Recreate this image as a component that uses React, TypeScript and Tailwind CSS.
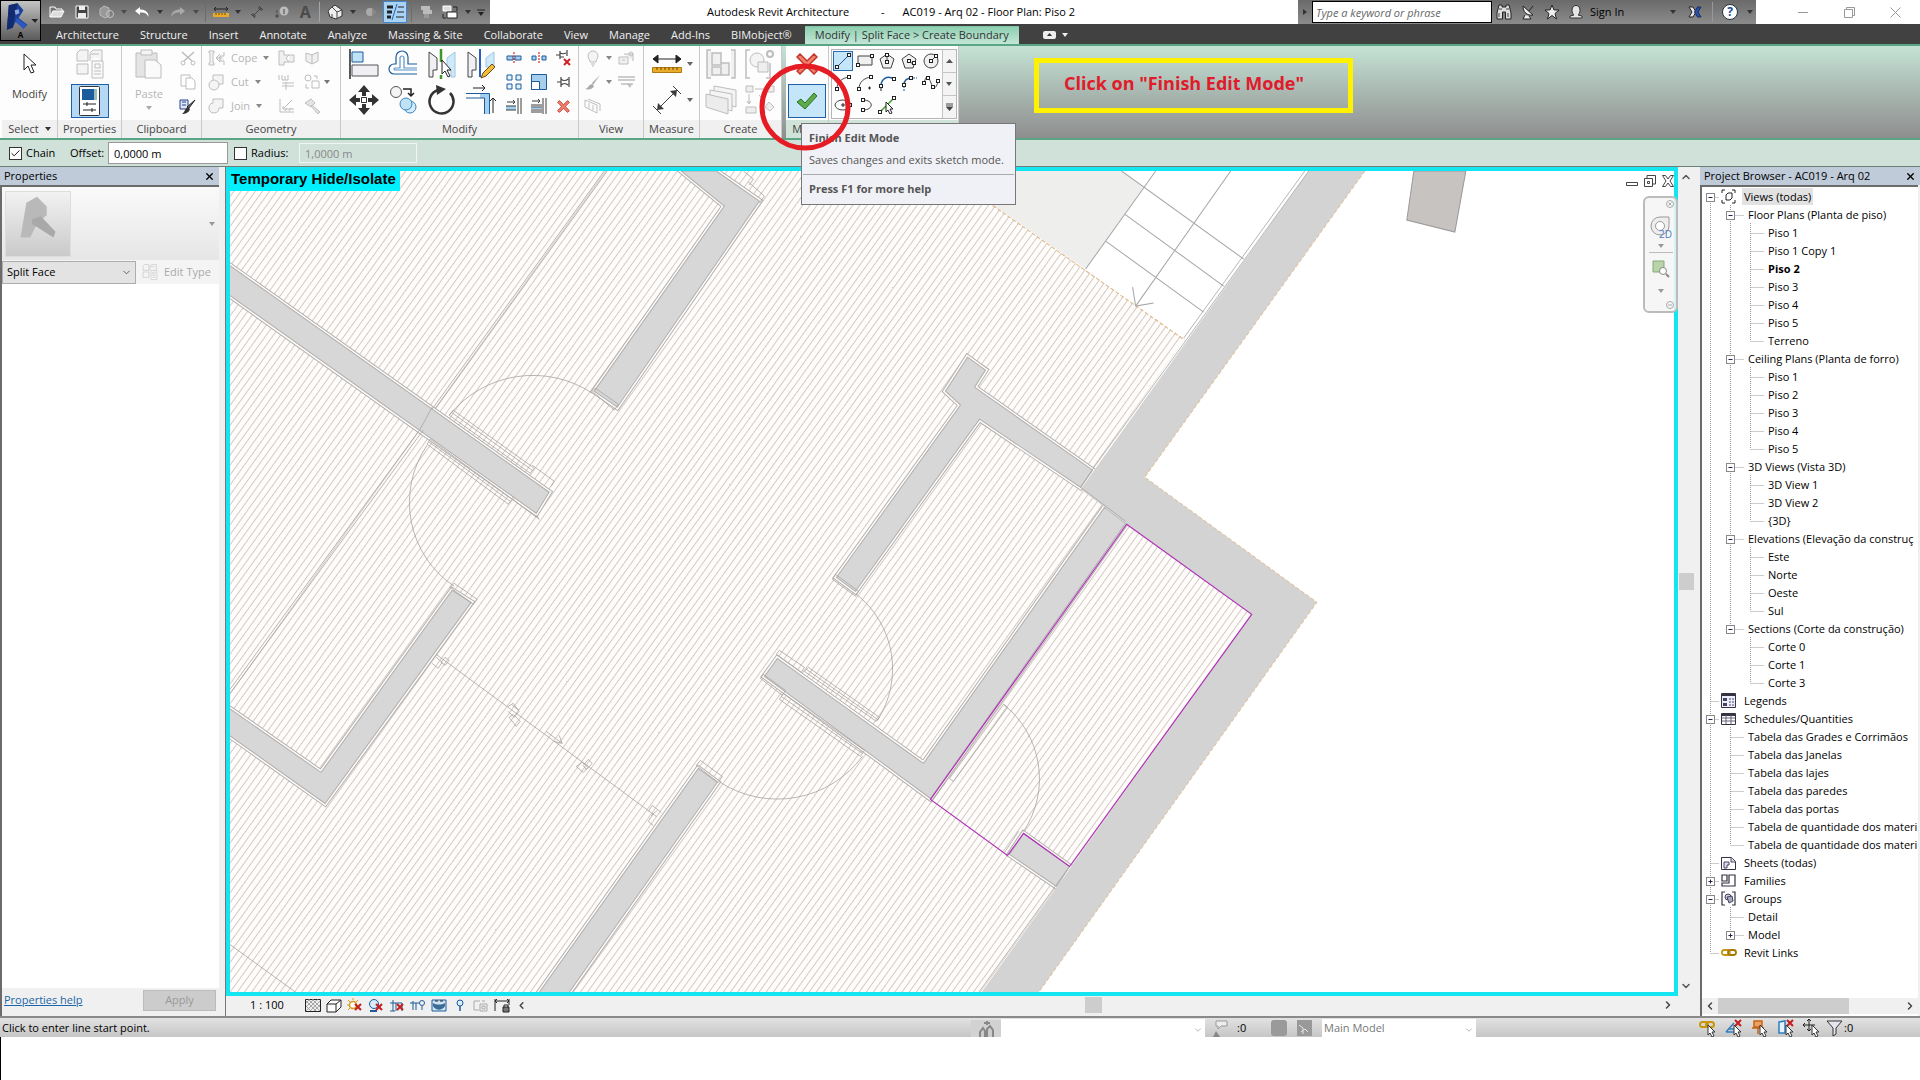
import type { ReactNode } from 'react'
import { Check, ChevronDown, ChevronLeft, ChevronRight, ChevronUp, X } from 'lucide-react'

type IconProps = { w?: number; h?: number; children: ReactNode }

function Svg({ w = 20, h = 20, children }: IconProps) {
  return (
    <svg width={w} height={h} viewBox={`0 0 ${w} ${h}`} fill="none" className="block shrink-0" aria-hidden="true">
      {children}
    </svg>
  )
}

function Caret({ color = '#666' }: { color?: string }) {
  return (
    <Svg w={6} h={4}>
      <path d="M0 0h6L3 4z" fill={color} />
    </Svg>
  )
}

function Btn({ label, className = '', children }: { label: string; className?: string; children: ReactNode }) {
  return (
    <button type="button" aria-label={label} className={`flex items-center justify-center ${className}`}>
      {children}
    </button>
  )
}

/* ---------- title bar ---------- */

function AppButton() {
  return (
    <button
      type="button"
      aria-label="Application menu"
      className="absolute left-0 top-0 z-10 flex h-[41px] w-[41px] flex-col items-center border border-black bg-linear-to-b from-[#c4c4c4] to-[#5c5c5c]"
    >
      <svg viewBox="0 0 40 30" className="block h-[30px] w-full" aria-hidden="true">
        <path d="M8 4l9-2 6 7-5 8 9 7-4 4-8-7-3 6-6 2z" fill="#1b3f9c" />
        <path d="M8 4l9-2-2 9-3 16-6 2z" fill="#122a6e" />
        <path d="M14 9l4-1 1 4-4 2z" fill="#8fa6dc" />
        <path d="M16 17l10 7-3 4-8-8z" fill="#2c57c4" />
        <path d="M31 18h7l-3 4z" fill="#222" />
      </svg>
      <span className="text-[8px] font-bold leading-2 text-black">A</span>
    </button>
  )
}

function Sep() {
  return <span className="mx-1 h-5 w-px bg-[#6b6b6b]" />
}

function QuickAccess() {
  return (
    <div className="flex h-6 w-[490px] items-center bg-linear-to-b from-[#6a6a6a] to-[#8c8c8c] pl-[45px]">
      <Btn label="Open" className="w-6">
        <Svg w={16} h={14}>
          <path d="M1 12V2h5l1 2h6v2" stroke="#fff" />
          <path d="M1 12l3-6h11l-3 6z" fill="#ddd" stroke="#fff" />
        </Svg>
      </Btn>
      <Btn label="Save" className="w-[26px]">
        <Svg w={14} h={14}>
          <path d="M1 1h12v12H1z" fill="#444" stroke="#fff" />
          <path d="M4 1h6v4H4zM3 8h8v5H3z" fill="#eee" />
        </Svg>
      </Btn>
      <Btn label="Synchronize" className="w-6">
        <Svg w={16} h={14}>
          <path d="M1 4l4-3 5 2v8l-4 2-5-3z" fill="#999" stroke="#bbb" />
          <circle cx="11" cy="9" r="3.5" stroke="#c4c4c4" />
        </Svg>
      </Btn>
      <Btn label="Synchronize options" className="w-2.5"><Caret color="#4a4a4a" /></Btn>
      <Btn label="Undo" className="w-[26px]">
        <Svg w={16} h={12}>
          <path d="M6 1L1 5l5 4V6.500c4-.5 7 .5 8.500 4.500C15 6 11 3.500 6 3.500z" fill="#fff" />
        </Svg>
      </Btn>
      <Btn label="Undo options" className="w-2.5"><Caret color="#333" /></Btn>
      <Btn label="Redo" className="w-[26px]">
        <Svg w={16} h={12}>
          <path d="M10 1l5 4-5 4V6.500C6 6 3 7 1.500 11 1 6 5 3.500 10 3.500z" fill="#aaa" />
        </Svg>
      </Btn>
      <Btn label="Redo options" className="w-2.5"><Caret color="#4a4a4a" /></Btn>
      <Sep />
      <Btn label="Measure" className="w-[22px]">
        <Svg w={16} h={12}>
          <path d="M1 3h14M3 1L1 3l2 2M13 1l2 2-2 2" stroke="#222" />
          <path d="M0 7h16v4H0z" fill="#e9ab2b" />
          <path d="M3 7v2M6 7v2M9 7v2M12 7v2" stroke="#704c00" />
        </Svg>
      </Btn>
      <Btn label="Measure options" className="w-3"><Caret color="#333" /></Btn>
      <Btn label="Aligned dimension" className="w-7">
        <Svg w={14} h={14}>
          <path d="M3 11l8-8M1 9l4 4M9 1l4 4M8 3h3v3M3 8v3h3" stroke="#444" />
        </Svg>
      </Btn>
      <Btn label="Tag by category" className="w-[22px]">
        <Svg w={14} h={14}>
          <path d="M0 11h4M2 9v4M2 5v3" stroke="#444" />
          <circle cx="9" cy="6" r="4.500" fill="#bbb" />
          <path d="M9 4v5" stroke="#444" />
        </Svg>
      </Btn>
      <Btn label="Text" className="w-6">
        <span className="text-base font-bold leading-5 text-[#4b4b4b]">A</span>
      </Btn>
      <span className="mx-0.5 h-5 w-px bg-[#a5a5a5]" />
      <Btn label="Default 3D view" className="w-[26px]">
        <Svg w={16} h={16}>
          <path d="M1 7l4-4 3-2 7 5v6l-6 3-6-2z" fill="#eee" stroke="#333" />
          <path d="M1 7l4-4 5 5v7M10 8l5-2M5 10v3" stroke="#444" />
        </Svg>
      </Btn>
      <Btn label="3D view options" className="w-2.5"><Caret color="#333" /></Btn>
      <Btn label="Section" className="w-[25px]">
        <Svg w={12} h={12}>
          <circle cx="5" cy="6" r="4" fill="#aaa" />
          <path d="M7 2l5 4-5 4z" fill="#888" />
        </Svg>
      </Btn>
      <Btn label="Thin lines" className="h-[22px] w-6 border border-[#3f87cf] bg-[#a9d2f3]">
        <Svg w={18} h={16}>
          <path d="M1 3h6M1 8h5M1 13h4" stroke="#222" strokeWidth="3" />
          <path d="M12 3h6M11 8h7M10 13h8" stroke="#222" />
          <path d="M11 0L6 16" stroke="#1f64c0" />
        </Svg>
      </Btn>
      <Sep />
      <Btn label="Close hidden windows" className="w-5">
        <Svg w={12} h={14}>
          <path d="M1 1h9v4H1zM3 5h9v4H3z" fill="#bbb" />
          <path d="M4 9h5v4H4z" fill="#999" />
        </Svg>
      </Btn>
      <Btn label="Switch windows" className="w-7">
        <Svg w={16} h={16}>
          <path d="M1 2h8v5H1z" fill="#ddd" stroke="#fff" />
          <path d="M5 8h10v6H5z" fill="#fff" stroke="#222" />
          <path d="M11 3h4v4M1 10v4h3" stroke="#222" />
        </Svg>
      </Btn>
      <Btn label="Window options" className="w-2"><Caret color="#333" /></Btn>
      <Btn label="Customize toolbar" className="w-[18px]">
        <Svg w={8} h={7}>
          <path d="M0 1h8" stroke="#222" />
          <path d="M1 3h6L4 7z" fill="#222" />
        </Svg>
      </Btn>
    </div>
  )
}

function InfoCenter() {
  return (
    <div className="flex h-6 w-[458px] items-center bg-linear-to-b from-[#6a6a6a] to-[#8c8c8c]">
      <span className="flex w-3.5 justify-center">
        <Svg w={4} h={6}><path d="M0 0l4 3-4 3z" fill="#333" /></Svg>
      </span>
      <input
        aria-label="Search"
        placeholder="Type a keyword or phrase"
        className="h-[22px] w-[180px] border border-black bg-white px-[3px] italic outline-none placeholder:text-[#666]"
      />
      <Btn label="Search help" className="w-6">
        <Svg w={16} h={16}>
          <path d="M3 1h3v2h4V1h3l2 8v6h-5.500V8h-3v7H1V9z" fill="#ddd" stroke="#222" />
          <path d="M3 9v4M12 9v4M3 5h3M10 5h3" stroke="#444" />
        </Svg>
      </Btn>
      <Btn label="Communication center" className="w-6">
        <Svg w={14} h={16}>
          <path d="M2 2c0 6 4 10 10 9zM8 7l4-5M4 11l-2 4h8l-2-3" fill="#eee" stroke="#222" />
        </Svg>
      </Btn>
      <Btn label="Favorites" className="w-6">
        <Svg w={16} h={16}>
          <path d="M8 1l2 5h5l-4 3.500L12.500 15 8 11.500 3.500 15 5 9.500 1 6h5z" fill="#eee" stroke="#222" />
        </Svg>
      </Btn>
      <button type="button" className="flex w-[104px] items-center gap-1.5 pl-1 text-black">
        <Svg w={16} h={16}>
          <path d="M4 6c0-6 8-6 8 0 0 3-1 4-2 5l4 1v2H2v-2l4-1C5 10 4 9 4 6z" fill="#e6e6e6" stroke="#333" />
        </Svg>
        Sign In
      </button>
      <Btn label="Sign in options" className="w-2.5"><Caret color="#333" /></Btn>
      <Btn label="Exchange apps" className="w-[34px]">
        <Svg w={14} h={14}>
          <path d="M1 2h4l3 5-3 5H1l3-5z" fill="#e6e6e6" stroke="#223" />
          <path d="M13 2H9.500L6.500 7l3 5H13l-3-5z" fill="#2850a8" stroke="#1b2f66" />
        </Svg>
      </Btn>
      <span className="h-5 w-px bg-[#999]" />
      <Btn label="Help" className="w-[34px]">
        <span className="flex h-4 w-4 items-center justify-center rounded-full border border-[#234] bg-white text-xs font-bold leading-4 text-[#224a9c]">
          ?
        </span>
      </Btn>
      <Btn label="Help options" className="w-1.5"><Caret color="#333" /></Btn>
    </div>
  )
}

function TitleBar() {
  return (
    <header className="relative flex h-6 bg-white">
      <AppButton />
      <QuickAccess />
      <div className="flex flex-1 items-center justify-center gap-8 whitespace-pre pr-1.5 text-black">
        <span>Autodesk Revit Architecture</span>
        <span>-</span>
        <span className="-ml-3.5">AC019 - Arq 02 - Floor Plan: Piso 2</span>
      </div>
      <InfoCenter />
      <div className="flex w-[164px] items-center pl-6">
        <Btn label="Minimize" className="w-[46px]"><Svg w={10} h={10}><path d="M0 5.500h10" stroke="#999" /></Svg></Btn>
        <Btn label="Restore" className="w-[46px]">
          <Svg w={11} h={11}><path d="M.5 2.500h8v8h-8zM2.500 2V.5h8v8H9" stroke="#999" /></Svg>
        </Btn>
        <Btn label="Close" className="w-[46px]"><Svg w={11} h={11}><path d="M.5.5l10 10M10.500.5l-10 10" stroke="#999" /></Svg></Btn>
      </div>
    </header>
  )
}

const tabs = [
  'Architecture', 'Structure', 'Insert', 'Annotate', 'Analyze', 'Massing & Site',
  'Collaborate', 'View', 'Manage', 'Add-Ins', 'BIMobject®',
]

function TabBar() {
  return (
    <nav className="flex h-5 items-end gap-px bg-[#414141] pl-[46px] text-[#f0f0f0]">
      {tabs.map((tab) => (
        <button key={tab} type="button" className="h-[18px] whitespace-nowrap px-2.5">{tab}</button>
      ))}
      <button
        type="button"
        className="ml-0.5 h-[18px] whitespace-nowrap border-t border-[#7fc4a5] bg-linear-to-b from-[#8fd0b2] to-[#c2e6d6] px-2.5 text-[#333]"
      >
        Modify | Split Face &gt; Create Boundary
      </button>
      <Btn label="Minimize ribbon" className="ml-[22px] h-[18px] w-4">
        <Svg w={13} h={8}>
          <rect width="13" height="8" rx="2" fill="#eee" />
          <path d="M4 5h5L6.500 2z" fill="#333" />
        </Svg>
      </Btn>
      <Btn label="Ribbon display options" className="h-[18px] w-3"><Caret color="#eee" /></Btn>
    </nav>
  )
}

/* ---------- ribbon ---------- */

function Panel({ title, className, tint = 'bg-[#f0f0f0]', children }: {
  title: ReactNode
  className: string
  tint?: string
  children: ReactNode
}) {
  return (
    <section className={`flex shrink-0 flex-col border-r border-[#c9c9c9] bg-[#fdfdfd] ${className}`}>
      <div className="flex flex-1 justify-center">{children}</div>
      <h2 className={`flex h-[18px] items-center justify-center gap-1.5 overflow-hidden whitespace-nowrap ${tint}`}>{title}</h2>
    </section>
  )
}

function Big({ label, children, w = 'w-[39px]' }: { label: string; children: ReactNode; w?: string }) {
  return <Btn label={label} className={`h-9 ${w}`}>{children}</Btn>
}

function Small({ label, children, w = 'w-[25px]' }: { label: string; children: ReactNode; w?: string }) {
  return <Btn label={label} className={`h-6 ${w}`}>{children}</Btn>
}

const G = '#bdbdbd'
const B = '#1d5c9c'
const D = '#3c3c3c'

function TypeIcon({ s = 30 }: { s?: number }) {
  return (
    <svg width={s} height={s} viewBox="0 0 30 30" fill="none" stroke={G} aria-hidden="true">
      <path d="M2 4l3-3h8v11H2zM15 4l3-3h9v11M2 15h11v10H2zM15 12V5h9" fill="#f4f4f4" />
      <path d="M17 12h11v17H17z" fill="#fafafa" />
      <path d="M20 15h5v4h-5zM19 22h7M19 25h7" />
    </svg>
  )
}

function SelectPanel() {
  return (
    <Panel title={<>Select <Caret color="#333" /></>} className="w-[58px] pl-0.5">
      <button type="button" className="flex flex-col items-center self-start">
        <span className="flex h-9 items-center">
          <Svg w={14} h={22}>
            <path d="M2 1v16l4-4 3 7 3-1-3-7h5z" fill="#fff" stroke="#222" />
          </Svg>
        </span>
        <span className="leading-6">Modify</span>
      </button>
    </Panel>
  )
}

function PropertiesPanel() {
  return (
    <Panel title="Properties" className="w-16">
      <div className="flex flex-col items-center">
        <Big label="Type properties"><TypeIcon /></Big>
        <Btn label="Properties" className="mt-0.5 h-[34px] w-[38px] border border-[#1f5fa8] bg-[#b5d9f5]">
          <Svg w={21} h={30}>
            <rect x=".5" y=".5" width="20" height="29" rx="1" fill="#fff" stroke="#333" />
            <path d="M3 3h12v11H3z" fill="#1d5c9c" />
            <path d="M15 3h3v11h-3z" fill="#9bb" />
            <path d="M4 18h13M4 24h13M8 16v4M13 22v4" stroke="#222" />
          </Svg>
        </Btn>
      </div>
    </Panel>
  )
}

function ClipboardPanel() {
  return (
    <Panel title="Clipboard" className="w-20">
      <button type="button" className="flex w-[52px] flex-col items-center self-start text-[#b5b5b5]">
        <span className="flex h-9 items-center">
          <Svg w={28} h={30}>
            <path d="M1 4h21v24H1z" fill="#e4e4e4" stroke={G} />
            <path d="M6 1h11v5H6z" fill="#f4f4f4" stroke={G} />
            <path d="M10 11h10l6 5v13H10z" fill="#fafafa" stroke={G} />
          </Svg>
        </span>
        <span className="leading-6">Paste</span>
        <Caret color="#aaa" />
      </button>
      <div className="flex flex-col">
        <Small label="Cut">
          <Svg w={16} h={16}>
            <path d="M2 2l10 9M14 2L4 11" stroke={G} strokeWidth="1.500" />
            <circle cx="3" cy="13" r="2" stroke={G} /><circle cx="13" cy="13" r="2" stroke={G} />
          </Svg>
        </Small>
        <Small label="Copy">
          <Svg w={16} h={16}><path d="M1 1h9v11H1z" stroke={G} /><path d="M6 4h6l3 3v8H6z" fill="#fff" stroke={G} /></Svg>
        </Small>
        <Small label="Match type">
          <Svg w={17} h={17}>
            <path d="M1 2h8v9H1z" fill="#dde8f8" stroke="#27408b" />
            <path d="M3 4h4M3 7h4" stroke="#27408b" />
            <path d="M16 2l-6 8-2-1z" fill="#777" stroke="#222" />
            <path d="M9 9l2 2c-1 4-5 5-8 5 3-2 3-6 6-7z" fill="#333" />
          </Svg>
        </Small>
      </div>
    </Panel>
  )
}

const geometryTools = [
  { name: 'Cope', d: 'M1 1h5v2H5v10h1v2H1v-2h1V3H1zM16 2v4h-4v5h4v4M12 4L8 8l4 4M8 8h6' },
  { name: 'Cut', d: 'M5 1h10v9h-4M5 6V1M6 6a5 5 0 1 0 0 10 5 5 0 0 0 0-10z' },
  { name: 'Join', d: 'M5 1h10v9h-4a5 5 0 1 1-6-5z' },
]

function GeometryPanel() {
  return (
    <Panel title="Geometry" className="w-[139px]">
      <div className="flex w-full pl-1.5">
        <div className="flex w-[66px] flex-col">
          {geometryTools.map((tool) => (
            <button key={tool.name} type="button" className="flex h-6 items-center gap-1.5 text-[#b5b5b5]">
              <Svg w={17} h={17}><path d={tool.d} stroke={G} fill="#f4f4f4" /></Svg>
              {tool.name}
              <Caret color="#888" />
            </button>
          ))}
        </div>
        <div className="flex flex-col">
          <Small label="Wall joins"><Svg w={17} h={16}><path d="M1 1h5v4h10v7H6v3H1zM11 5L8 8l3 4" stroke={G} fill="#f0f0f0" /></Svg></Small>
          <Small label="Beam joins"><Svg w={17} h={16}><path d="M1 1v5M4 1v5h6V1M7 2v4M4 9h12M4 12h12M8 8v8" stroke={G} /></Svg></Small>
          <Small label="Split face"><Svg w={17} h={16}><path d="M2 1v13h14M5 11L14 2M5 8v3h11M7 13l2-3M11 13l2-3" stroke={G} /></Svg></Small>
        </div>
        <div className="flex flex-col">
          <Small label="Paint"><Svg w={16} h={16}><path d="M2 3l6 2 6-3v9l-6 3-6-3zM8 5v9" stroke={G} fill="#f0f0f0" /></Svg></Small>
          <Small label="Unjoin"><Svg w={16} h={17}><circle cx="4" cy="4" r="3" stroke={G} /><path d="M8 7h7v7H8zM10 2h3v3M2 10v4h3" stroke={G} /></Svg></Small>
          <Small label="Demolish"><Svg w={16} h={16}><path d="M1 5l6-4 4 4-4 4zM8 7l8 7-2 2-7-8z" stroke={G} fill="#e4e4e4" /></Svg></Small>
        </div>
        <span className="flex h-[72px] items-center"><Caret color="#777" /></span>
      </div>
    </Panel>
  )
}

function RedX({ s }: { s: number }) {
  return (
    <svg width={s} height={s} viewBox="0 0 22 22" aria-hidden="true">
      <path d="M1 4l3-3 7 7 7-7 3 3-7 7 7 7-3 3-7-7-7 7-3-3 7-7z" fill="#f0806e" stroke="#c4362c" strokeWidth="1.500" />
    </svg>
  )
}

function ModifyPanel() {
  return (
    <Panel title="Modify" className="w-[238px]">
      <div className="grid grid-cols-4 content-start pl-px">
        <Big label="Align">
          <Svg w={30} h={30}>
            <path d="M1 0v30" stroke="#222" strokeWidth="1.500" />
            <path d="M3 3h11v10H3z" fill="#bfe2f7" stroke={B} />
            <path d="M3 16h26v11H3z" fill="#f0f0f4" stroke="#555" />
          </Svg>
        </Big>
        <Big label="Offset">
          <Svg w={30} h={28}>
            <path d="M29 14H20V7a6 6 0 0 0-12 0v7H6a4 4 0 0 0 0 10h23" stroke={B} strokeWidth="1.200" />
            <path d="M29 18H16V8a2 2 0 0 0-4 0v10H7a1 1 0 0 0 0 2h22" stroke="#5b93c8" strokeWidth="1.200" />
          </Svg>
        </Big>
        <Big label="Mirror by axis">
          <Svg w={30} h={30}>
            <path d="M2 28V3l8 6v12H6v7z" fill="#f0f0f4" stroke="#444" />
            <path d="M28 28V3l-8 6v12h4v7z" fill="#cfe9f9" stroke="#9cc7e4" />
            <path d="M14 0v13M14 26v4" stroke="#3c9a28" strokeWidth="2.500" />
            <path d="M15 11v14l3-3 3 6 2-1-3-6h4z" fill="#fff" stroke="#222" />
          </Svg>
        </Big>
        <Big label="Mirror by line">
          <Svg w={30} h={30}>
            <path d="M2 28V3l8 6v12H6v7z" fill="#f0f0f4" stroke="#444" />
            <path d="M28 18V3l-8 6v9z" fill="#cfe9f9" stroke="#9cc7e4" />
            <path d="M14 0v28" stroke="#2860c0" strokeWidth="2" />
            <path d="M15 29l2-5 9-9 3 3-9 9z" fill="#f2bd3e" stroke="#6b4a10" />
          </Svg>
        </Big>
        <Big label="Move">
          <Svg w={30} h={30}>
            <path d="M15 0l6 7h-4v4h-4V7H9zM15 30l6-7h-4v-4h-4v4H9zM0 15l7-6v4h4v4H7v4zM30 15l-7-6v4h-4v4h4v4z" fill="#333" />
            <path d="M12.500 12.500h5v5h-5z" fill="#fff" stroke="#333" />
          </Svg>
        </Big>
        <Big label="Copy element">
          <Svg w={30} h={30}>
            <circle cx="8" cy="7" r="5.500" fill="#f4f4f4" stroke="#555" />
            <path d="M15 4h8v6M20 8l3 3 3-3" stroke="#222" strokeWidth="1.500" />
            <circle cx="22" cy="22" r="6" fill="#d6ecfa" stroke="#3c84b8" />
            <circle cx="18" cy="19" r="6" fill="#bfe2f7" stroke="#3c84b8" />
          </Svg>
        </Big>
        <Big label="Rotate">
          <Svg w={30} h={30}>
            <path d="M23 8a12 12 0 1 1-12-3" stroke="#333" strokeWidth="2.500" />
            <path d="M9 0l10 4-9 6z" fill="#333" />
          </Svg>
        </Big>
        <Big label="Trim to corner">
          <Svg w={30} h={30}>
            <path d="M14 9h9v20h-4V13h-5z" fill="#a5cfec" />
            <path d="M0 8.500h23.500V29M0 13h18.500v16" stroke={B} />
            <path d="M7 3h12M16 0l3 3-3 3M27 28V13M24 16l3-3 3 3" stroke="#222" />
          </Svg>
        </Big>
      </div>
      <div className="ml-px grid grid-cols-3 content-start">
        <Small label="Split element">
          <Svg w={16} h={12}><path d="M1 4h6v4H1zM9 4h6v4H9z" fill="#a5cfec" stroke={B} /><path d="M8 0v12" stroke="#c00" strokeDasharray="2 1" /></Svg>
        </Small>
        <Small label="Split with gap">
          <Svg w={16} h={12}><path d="M1 4h4v4H1zM11 4h4v4h-4z" fill="#a5cfec" stroke={B} /><path d="M8 0v12" stroke="#c00" strokeDasharray="2 1" /></Svg>
        </Small>
        <Small label="Unpin">
          <Svg w={16} h={16}>
            <path d="M0 5h4M4 1v8M4 3c2 1 4 1 6 0M4 7h4M11 0v6" stroke="#444" strokeWidth="1.200" />
            <path d="M8 9l6 6M14 9l-6 6" stroke="#c22" strokeWidth="2" />
          </Svg>
        </Small>
        <Small label="Array">
          <Svg w={16} h={16}>
            <path d="M1 1h5v5H1zM10 1h5v5h-5zM1 10h5v5H1zM10 10h5v5h-5z" fill="#e3f2fb" stroke={B} />
          </Svg>
        </Small>
        <Small label="Scale">
          <Svg w={16} h={16}><path d="M.5.5h15v15H.5z" fill="#a5cfec" stroke={B} /><path d="M.5 7.500h8v8h-8z" fill="#fff" stroke={B} /></Svg>
        </Small>
        <Small label="Pin">
          <Svg w={14} h={12}><path d="M0 6h4M4 1v10M4 3c2 2 5 2 7 0M4 9c2-2 5-2 7 0M12 1v10" stroke="#444" strokeWidth="1.200" /></Svg>
        </Small>
        <Small label="Trim single">
          <Svg w={16} h={16}><path d="M0 8h10v4H0z" fill="#a5cfec" /><path d="M0 8h10M0 12h10M1 4h8M7 2l2 2-2 2M12 0v16M15 0v16" stroke={D} /></Svg>
        </Small>
        <Small label="Trim multiple">
          <Svg w={16} h={16}><path d="M0 7h11M0 9h11M0 12h11M0 14h11M1 3h8M7 1l2 2-2 2M12 0v16M15 0v16" stroke={D} /><path d="M0 10h11" stroke="#5b93c8" /></Svg>
        </Small>
        <Small label="Delete"><RedX s={13} /></Small>
      </div>
    </Panel>
  )
}

function ViewPanel() {
  return (
    <Panel title="View" className="w-[65px]">
      <div className="grid w-full grid-cols-[26px_8px_1fr] content-start pl-px">
        <Small label="Hide in view"><Svg w={12} h={17}><path d="M3 12c0-3-2-3-2-6a5 5 0 0 1 10 0c0 3-2 3-2 6zM4 14h4M5 16h2" stroke={G} fill="#f4f4f4" /></Svg></Small>
        <span className="flex items-center"><Caret color="#888" /></span>
        <Small label="Override graphics"><Svg w={17} h={14}><path d="M1 6h9v7H1zM6 3h9v7M4 9h3" stroke={G} fill="#f0f0f0" /><circle cx="13" cy="3" r="2" stroke={G} /></Svg></Small>
        <Small label="Linework"><Svg w={17} h={15}><path d="M16 0l-8 8 1 2zM8 9c-4 1-3 4-7 5 4 1 8 0 9-3z" fill="#aaa" /></Svg></Small>
        <span className="flex items-center"><Caret color="#888" /></span>
        <Small label="Displace"><Svg w={17} h={12}><path d="M0 1h17M0 4h17M3 8h12" stroke={G} strokeWidth="1.500" /><path d="M9 8h5l-2 4z" fill={G} /></Svg></Small>
        <Small label="Selection box"><Svg w={17} h={16}><path d="M1 2l12 5v8L1 9zM4 1l12 5v7M5 5v5M9 7v5" stroke={G} /></Svg></Small>
      </div>
    </Panel>
  )
}

function MeasurePanel() {
  return (
    <Panel title="Measure" className="w-14">
      <div className="grid grid-cols-[34px_12px] content-start pl-0.5">
        <Big label="Measure between" w="w-[34px]">
          <Svg w={30} h={18}>
            <path d="M1 4h28M6 0L1 4l5 4zM24 0l5 4-5 4z" stroke="#222" fill="#222" />
            <path d="M.5 12.500h29v5H.5z" fill="#e9ab2b" stroke="#b07a10" />
            <path d="M5 12v3M9 12v3M13 12v3M17 12v3M21 12v3M25 12v3" stroke="#704c00" />
          </Svg>
        </Big>
        <span className="flex items-center justify-center"><Caret /></span>
        <Big label="Dimension" w="w-[34px]">
          <Svg w={30} h={30}>
            <path d="M6 24L24 6M1 21l8 8M21 1l8 8" stroke={D} />
            <path d="M5 25l1-7 6 6zM25 5l-7 1 6 6z" fill={D} />
          </Svg>
        </Big>
        <span className="flex items-center justify-center"><Caret /></span>
      </div>
    </Panel>
  )
}

function CreatePanel() {
  return (
    <Panel title="Create" className="w-[82px]">
      <div className="grid grid-cols-2 content-start">
        <Big label="Create assembly"><Svg w={30} h={30}><path d="M5 1H1v28h4M25 1h4v28h-4M6 4h9v12H6zM6 18h9v8H6zM15 14h8v12h-8" stroke={G} fill="#f0f0f0" strokeWidth="1.500" /></Svg></Big>
        <Big label="Create group"><Svg w={30} h={30}><path d="M5 1H1v28h4M25 14v15h-4" stroke={G} strokeWidth="1.500" /><circle cx="12" cy="11" r="7" fill="#f4f4f4" stroke={G} /><path d="M13 13h10v10H13z" fill="#eee" stroke={G} /><circle cx="25" cy="5" r="3" stroke={G} strokeWidth="2" /></Svg></Big>
        <Big label="Create parts">
          <Svg w={32} h={30}>
            <path d="M9 1l22 4v17L9 16z" fill="#f4f4f4" stroke={G} />
            <path d="M5 5l22 4v17L5 19z" fill="#f4f4f4" stroke={G} />
            <path d="M1 9l22 5v15L1 22z" fill="#ececec" stroke={G} />
          </Svg>
        </Big>
        <Big label="Create similar"><Svg w={30} h={30}><path d="M1 1h7v6H1zM22 1h7v6h-7zM10 4h10M4 9v9M2 16l2 3 2-3M1 22h10v6H1zM14 10l6 6M20 22l4-5 5 5-4 4z" fill="#eee" stroke={G} /></Svg></Big>
      </div>
    </Panel>
  )
}

function ModePanel() {
  return (
    <Panel title="Mode" className="w-[43px]" tint="bg-[#cfe3da]">
      <div className="flex flex-col items-center">
        <Big label="Cancel edit mode"><RedX s={22} /></Big>
        <Btn label="Finish edit mode" className="mt-0.5 h-[34px] w-[38px] border border-[#1f5fa8] bg-[#c5e6f8]">
          <Svg w={22} h={18}>
            <path d="M1 10l4-3 4 4L18 1l3 3L9 17z" fill="#5dab4b" stroke="#2e6e22" />
          </Svg>
        </Btn>
      </div>
    </Panel>
  )
}

function Node({ x, y }: { x: number; y: number }) {
  return <rect x={x - 1.5} y={y - 1.5} width="3" height="3" fill="#fff" stroke="#222" />
}

const drawTools: { name: string; art: ReactNode }[] = [
  { name: 'Line', art: <><path d="M3 15L15 3" stroke={B} /><Node x={3} y={15} /><Node x={15} y={3} /></> },
  { name: 'Rectangle', art: <><path d="M2 4h14v9H2z" stroke="#444" fill="#f0f0f0" /><Node x={2} y={13} /><Node x={16} y={4} /></> },
  { name: 'Inscribed polygon', art: <><path d="M9 2l7 5-3 9H5L2 7zM9 2v8" stroke="#444" fill="#f0f0f0" /><Node x={9} y={10} /><Node x={9} y={3} /></> },
  { name: 'Circumscribed polygon', art: <><path d="M9 2l7 5-3 9H5L2 7zM9 9l5 4" stroke="#444" fill="#f0f0f0" /><Node x={9} y={9} /><Node x={14} y={11} /></> },
  { name: 'Circle', art: <><circle cx="9" cy="9" r="7" stroke="#444" fill="#f0f0f0" /><path d="M9 9l4-4" stroke="#444" /><Node x={9} y={9} /><Node x={14} y={4} /></> },
  { name: 'Start-end-radius arc', art: <><path d="M3 15C3 8 8 4 15 3" stroke="#444" /><Node x={3} y={15} /><Node x={15} y={3} /></> },
  { name: 'Center-ends arc', art: <><path d="M3 15C3 8 8 4 15 3" stroke="#444" /><Node x={3} y={15} /><Node x={15} y={3} /><path d="M12 14h3M13.500 12.500v3" stroke="#222" /></> },
  { name: 'Tangent arc', art: <><path d="M3 12C3 5 9 1 16 5" stroke={B} strokeWidth="1.500" /><path d="M3 12v5" stroke="#222" /><Node x={3} y={12} /><Node x={16} y={5} /></> },
  { name: 'Fillet arc', art: <><path d="M4 11C4 7 6 4 12 4" stroke={B} strokeWidth="1.500" /><path d="M4 12v5M13 4h4" stroke={B} strokeDasharray="2 1" /><Node x={4} y={11} /><Node x={11} y={4} /></> },
  { name: 'Spline', art: <><path d="M2 9C5-2 7 4 9 9s4 8 7-1" stroke="#444" /><Node x={2} y={9} /><Node x={6} y={4} /><Node x={11} y={13} /><Node x={16} y={7} /></> },
  { name: 'Ellipse', art: <><ellipse cx="9" cy="9" rx="8" ry="5" stroke="#444" /><path d="M7 9h4M9 7v4" stroke="#222" /><Node x={16} y={9} /></> },
  { name: 'Partial ellipse', art: <><path d="M7 4c11 0 11 10 0 10" stroke="#444" /><Node x={7} y={4} /><Node x={7} y={14} /></> },
  { name: 'Pick lines', art: <><path d="M2 16L16 2" stroke="#3c9a28" strokeWidth="1.500" /><Node x={2} y={16} /><Node x={16} y={2} /><path d="M8 6v10l2-2 2 4 2-1-2-4h3z" fill="#fff" stroke="#222" /></> },
]

function DrawPanel() {
  return (
    <Panel title="" className="w-[130px]" tint="bg-[#cfe3da]">
      <div className="mt-[3px] flex h-[70px] w-[126px] border border-[#b5b5b5]">
        <div className="grid flex-1 grid-cols-5 content-start">
          {drawTools.map((tool, i) => (
            <Btn
              key={tool.name}
              label={tool.name}
              className={i === 0 ? 'm-px h-5 border border-[#2a6fb5] bg-[#c5e6f8]' : 'h-[22px]'}
            >
              <Svg w={18} h={18}>{tool.art}</Svg>
            </Btn>
          ))}
        </div>
        <div className="flex w-3.5 flex-col border-l border-[#c4c4c4] bg-[#f4f4f4]">
          <Btn label="Scroll tools up" className="flex-1 border-b border-[#c4c4c4]"><Svg w={7} h={4}><path d="M0 4h7L3.500 0z" fill="#555" /></Svg></Btn>
          <Btn label="Scroll tools down" className="flex-1 border-b border-[#c4c4c4]"><Caret color="#555" /></Btn>
          <Btn label="More tools" className="flex-1"><Svg w={7} h={8}><path d="M0 1h7M0 3h7" stroke="#444" /><path d="M0 4h7L3.500 8z" fill="#444" /></Svg></Btn>
        </div>
      </div>
    </Panel>
  )
}

function Ribbon() {
  return (
    <div className="relative flex h-24 border-y-2 border-[#5aa583] bg-linear-to-b from-[#c4e3d5] to-[#8e8e8e] text-[#444]">
      <SelectPanel />
      <PropertiesPanel />
      <ClipboardPanel />
      <GeometryPanel />
      <ModifyPanel />
      <ViewPanel />
      <MeasurePanel />
      <CreatePanel />
      <span className="w-1" />
      <ModePanel />
      <DrawPanel />
      <p className="ml-[75px] mt-3 flex h-[55px] w-[319px] items-start whitespace-nowrap border-[5px] border-[#fff200] pl-[25px] pt-1.5 text-lg font-bold leading-7 text-[#e01b2b]">
        Click on "Finish Edit Mode"
      </p>
      <div
        role="tooltip"
        className="absolute left-[801px] top-[77px] z-20 flex h-[82px] w-[215px] flex-col border border-[#777] bg-[#f0f1f6] text-[#555]"
      >
        <strong className="px-[7px] pt-1 leading-5">Finish Edit Mode</strong>
        <span className="whitespace-nowrap px-[7px] pt-0.5 leading-5">Saves changes and exits sketch mode.</span>
        <strong className="mx-px mt-1 border-t border-[#aaa] px-1.5 pt-1 leading-5">Press F1 for more help</strong>
      </div>
      <svg viewBox="0 0 92 88" className="absolute left-[759px] top-[17px] z-30 h-[88px] w-[92px]" fill="none" aria-hidden="true">
        <ellipse cx="46" cy="44" rx="43" ry="41" stroke="#e51c23" strokeWidth="5" />
      </svg>
    </div>
  )
}

function Tick({ label, checked }: { label: string; checked?: boolean }) {
  return (
    <label className="flex items-center gap-1">
      <span className="relative h-[13px] w-[13px]">
        <input type="checkbox" defaultChecked={checked} className="peer block h-[13px] w-[13px] appearance-none border border-[#333] bg-white" />
        <Check className="pointer-events-none absolute left-px top-px hidden h-[11px] w-[11px] text-black peer-checked:block" />
      </span>
      {label}
    </label>
  )
}

function OptionsBar() {
  return (
    <div className="flex h-[27px] items-center border-b border-[#6d7f78] bg-[#d0e1da] pl-[9px] text-black">
      <div className="w-[61px]"><Tick label="Chain" checked /></div>
      <label htmlFor="offset" className="w-[38px]">Offset:</label>
      <input id="offset" defaultValue="0,0000 m" className="h-[22px] w-[120px] border border-[#999] bg-white px-[5px] outline-none" />
      <div className="ml-1.5 w-[65px]"><Tick label="Radius:" /></div>
      <input aria-label="Radius value" disabled defaultValue="1,0000 m" className="h-5 w-[118px] border border-[#f0f5f3] px-[5px] text-[#888]" />
    </div>
  )
}

/* ---------- properties palette ---------- */

function PaletteTitle({ children }: { children: ReactNode }) {
  return (
    <div className="flex h-[18px] shrink-0 items-center justify-between bg-[#bfcbd9] pl-1 pr-1 text-black">
      <h2>{children}</h2>
      <Btn label="Close palette"><X size={11} strokeWidth={3} /></Btn>
    </div>
  )
}

function PropertiesPalette() {
  return (
    <aside className="flex w-[219px] shrink-0 flex-col bg-[#f0f0f0] text-black">
      <PaletteTitle>Properties</PaletteTitle>
      <div className="flex min-h-0 flex-1 flex-col border-l-2 border-t-2 border-[#6b6b6b] bg-white">
        <div className="flex h-[73px] items-center justify-between bg-linear-to-b from-[#fafafa] to-[#e6e6e6] pl-[3px] pr-1">
          <div className="h-[66px] w-[66px] border border-[#ddd] bg-linear-to-b from-[#f2f2f2] to-[#cacaca]">
            <svg viewBox="0 0 66 66" className="block h-full w-full" aria-hidden="true">
              <path d="M21 11l11-6 10 10v9l-9 7-8 16H15z" fill="#b9b9b9" />
              <path d="M27 28l9-3 15 16-2 6-22-14z" fill="#a9a9a9" />
            </svg>
          </div>
          <Caret color="#999" />
        </div>
        <div className="flex h-6 items-center bg-[#f4f4f4]">
          <span className="relative">
            <select aria-label="Type filter" className="block h-[23px] w-[134px] appearance-none border border-[#adadad] bg-[#e3e3e3] pl-1">
              <option>Split Face</option>
            </select>
            <ChevronDown size={11} className="pointer-events-none absolute right-1 top-1.5 text-[#555]" />
          </span>
          <button type="button" className="ml-1.5 flex items-center gap-1.5 text-[#aaa]">
            <TypeIcon s={16} />
            Edit Type
          </button>
        </div>
        <div className="flex-1" />
        <div className="flex h-7 items-start justify-between bg-[#f0f0f0] pl-0.5 pr-[3px] pt-0.5">
          <a href="#help" className="leading-5 text-[#1a66a8] underline">Properties help</a>
          <button type="button" disabled className="h-[21px] w-[73px] border border-[#bbb] bg-[#cccccc] text-[#999]">Apply</button>
        </div>
      </div>
    </aside>
  )
}

/* ---------- drawing area ---------- */

const walls = [
  '681,172 724,207 594,392 617,408 759,202 716,172',
  '225,263 549,493 536,514 225,293',
  '452,591 471,603 325,804 225,733 225,706 321,773',
  '698,769 717,783 566,997 536,997',
  '967,358 985,371 974,388 1092,471 1080,488 979,420 855,592 836,578 960,406 945,392',
  '1104,508 1125,524 930,799 764,677 777,659 923,764',
  '1023,834 1069,867 1056,887 1009,855',
]

// thin trims, door leaves and swings
const details = [
  'M604 172L432 410M607 172L435 410M420 430L230 690M423 431L230 694M432 408L420 430',
  'M449 416L453 411L534 469L530 474ZM451 413L532 471M449 416A108 108 0 0 1 592 394',
  'M427 445L430 440M427 445L508 505L512 500L430 440M429 443L510 502M427 446A101 101 0 0 0 454 587',
  'M592 392L595 389L618 405L614 411ZM536 516L539 520L515 502L512 498M532 466L554 482L551 487',
  'M450 588L454 584L477 600L473 605Z',
  'M804 672L808 668L879 718L876 722ZM806 670L877 720M856 595A95 95 0 0 1 877 721',
  'M776 655L779 651L804 668L801 673ZM832 580L835 575L858 592L855 597ZM760 679L763 675L785 691L782 696Z',
  'M779 700L783 694L864 751L860 757ZM781 697L862 754M862 757A106 106 0 0 1 720 783',
  'M696 766L700 761L722 777L718 783Z',
  'M1003 705L1007 708L953 782L949 779ZM1003 705A95 95 0 0 1 1023 832M945 783L932 800M1018 832L1004 853',
  'M436 655L656 817M432 664L438 669L442 663L436 658M441 663L445 658L449 661L445 666Z',
  'M508 707L513 704L519 712L514 718L508 712M509 718L513 715L520 722L516 727ZM512 706L519 711',
  'M576 767L582 763L588 768L583 773ZM583 766L588 760L592 764L586 770Z',
  'M648 812L652 806L661 813M651 816L657 811M653 826L648 822L653 814',
  'M546 732L562 744M559 736L562 744L554 742M230 945L296 993',
  'M743 172L753 180L749 186M748 183L764 197L759 204',
  'M1308 172L1092 470M1080 488L1125 522M1092 470L1080 488M1069 867L978 993M1304 172L1183 339',
]

function FloorPlan() {
  return (
    <svg viewBox="230 172 1443 821" preserveAspectRatio="xMinYMin slice" className="block h-full w-full" fill="none" aria-hidden="true">
      <defs>
        <pattern id="boards" width="5.800" height="5.800" patternUnits="userSpaceOnUse" patternTransform="rotate(35.700)">
          <path d="M.5 0v6" stroke="#cdc4bd" strokeWidth=".9" />
        </pattern>
      </defs>
      <path d="M230 172H943L1184 340L1085 480L1252 615L980 993H230Z" fill="#fffdfb" />
      <path d="M230 172H943L1184 340L1085 480L1252 615L980 993H230Z" fill="url(#boards)" />
      <path d="M943 172H1121L1143 189L1085 270Z" fill="#eeeeec" />
      <path d="M1143 189L1155 172M1121 172L1243 260M1143 189L1085 270M1124 215L1223 287M1105 242L1203 313M1230 172L1135 307M1132 288L1135 307L1153 304" stroke="#a5a5a5" />
      <path d="M943 172L1184 341" stroke="#dfb584" strokeDasharray="4 2" />
      <path d="M1413 172H1465L1454 233L1406 221Z" fill="#c6c3c1" stroke="#999" />
      {walls.map((points) => (
        <g key={points}>
          <polygon points={points} stroke="#b3afac" strokeWidth="6" />
          <polygon points={points} stroke="#fffdfb" strokeWidth="4" />
        </g>
      ))}
      {walls.map((points) => (
        <polygon key={points} points={points} fill="#d7d7d7" stroke="#aeaeae" />
      ))}
      <path d="M1308 172H1364L1144 478L1316 603L1035 997H978L1251 615L1125 524L1080 490Z" fill="#d3d3d3" />
      <path d="M1364 172L1144 478L1316 603L1035 997" stroke="#e0c19c" strokeDasharray="4 2" />
      {details.map((d) => <path key={d} d={d} stroke="#a8a3a0" strokeWidth=".8" />)}
      <path d="M1126 525L1251 615L1069 867L1023 834L1007 856L930 800Z" stroke="#b030b8" strokeWidth="1.200" />
    </svg>
  )
}

function NavBar() {
  return (
    <div className="absolute -right-1 top-[25px] flex h-[117px] w-[35px] flex-col items-center rounded-md border-2 border-[#bbb] bg-[#f4f4f4]/85">
      <Btn label="Close navigation bar" className="h-3 self-end pr-0.5">
        <Svg w={8} h={8}><circle cx="4" cy="4" r="3.500" stroke="#aaa" /><path d="M2.500 2.500l3 3M5.500 2.500l-3 3" stroke="#aaa" /></Svg>
      </Btn>
      <Btn label="Steering wheel" className="relative h-[34px] w-full">
        <Svg w={24} h={24}>
          <path d="M11 2h9v9a9 9 0 1 1-9-9z" fill="#eee" stroke="#999" />
          <circle cx="11" cy="11" r="4.500" fill="#fff" stroke="#999" />
        </Svg>
        <span className="absolute bottom-1 right-1 text-[10px] leading-3 text-[#4f7cc0]">2D</span>
      </Btn>
      <Caret color="#999" />
      <span className="my-1 h-px w-6 bg-[#bbb]" />
      <Btn label="Zoom region" className="h-6">
        <Svg w={18} h={18}>
          <path d="M1 1h11v11H1z" fill="#b8d4a8" stroke="#85a878" />
          <circle cx="11" cy="11" r="3.500" fill="#fff" stroke="#888" /><path d="M14 14l3 3" stroke="#888" strokeWidth="2" />
        </Svg>
      </Btn>
      <span className="mt-2"><Caret color="#999" /></span>
      <Btn label="Navigation bar options" className="mb-0.5 mt-auto self-end pr-0.5">
        <Svg w={8} h={8}><circle cx="4" cy="4" r="3.500" stroke="#aaa" /><path d="M2 4h4" stroke="#aaa" /></Svg>
      </Btn>
    </div>
  )
}

function CrossMark() {
  return <path d="M8 6l6 6M14 6l-6 6" stroke="#c41e1e" strokeWidth="2" />
}

const viewControls: { name: string; art: ReactNode }[] = [
  { name: 'Detail level', art: <><path d="M.5 1.500h15v12H.5z" fill="#eee" stroke="#222" /><path d="M1 5l4-4M1 9l8-8M1 13l12-12M5 13L15 3M9 13l6-6M3 1l12 12M7 1l8 8M1 3l10 10M1 8l5 5" stroke="#888" strokeWidth=".7" /></> },
  { name: 'Visual style', art: <path d="M1 6h9v8H1zM1 6l4-4h10v7l-5 5M10 6l5-4" stroke="#222" fill="#fff" /> },
  { name: 'Sun path', art: <><circle cx="6" cy="7" r="3.500" stroke="#d99a1a" strokeWidth="1.500" fill="#fff" /><path d="M6 0v2M0 7h2M1 2l2 2M1 12l2-2M11 2L9 4" stroke="#d99a1a" /><CrossMark /></> },
  { name: 'Shadows', art: <><circle cx="6" cy="6" r="4.500" fill="#d6ecfa" stroke={B} /><path d="M2 13h7" stroke={B} strokeWidth="2" /><CrossMark /></> },
  { name: 'Crop view', art: <><path d="M4 2v11M1 5h12v8M7 5v8M1 13h5" stroke={B} /><CrossMark /></> },
  { name: 'Crop region', art: <><path d="M3 3v9M0 5h9M6 5v7" stroke={B} /><circle cx="12" cy="5" r="2.500" stroke={B} /><path d="M12 8v4" stroke={B} /></> },
  { name: 'Temporary hide', art: <><path d="M1 2h14v11H1z" fill="#cfe3f2" stroke={B} /><path d="M2 5c3 2 9 2 12 0v3c-3 5-9 5-12 0z" fill="#3c6c96" /><path d="M4 3h3M9 3h3" stroke="#222" /></> },
  { name: 'Reveal hidden', art: <><circle cx="8" cy="5" r="3" fill="#d6ecfa" stroke={B} /><path d="M8 8v5" stroke={B} strokeWidth="1.500" /></> },
  { name: 'Temporary view properties', art: <path d="M1 3h6M1 3v9h5M9 3h3M7 6h7v7H7zM9 8h3v3H9z" stroke="#aaa" /> },
  { name: 'Reveal constraints', art: <><path d="M1 1v12M15 1v6M1 3h14M3 1L1 3l2 2M13 1l2 2-2 2" stroke="#222" /><path d="M9 9h6v5H9z" fill="#777" stroke="#222" /><path d="M10 9V7h4v2" stroke="#222" /></> },
]

function DrawingArea() {
  return (
    <main className="flex min-w-0 flex-1 flex-col border-l border-[#777] bg-[#f0f0f0]">
      <div className="flex min-h-0 flex-1">
        <div className="relative min-h-0 min-w-0 flex-1 border-4 border-[#14e5f0] bg-white">
          <div className="absolute inset-0"><FloorPlan /></div>
          <h1 className="absolute left-0 top-0 h-5 bg-[#00f0ff] pl-px pr-1 font-['Liberation_Sans',sans-serif] text-[15px] font-bold leading-4 text-black">
            Temporary Hide/Isolate
          </h1>
          <div className="absolute right-0 top-1 flex gap-1.5">
            <Btn label="Minimize view"><Svg w={12} h={12}><path d="M.5 7.500h11v3H.5z" stroke="#444" /></Svg></Btn>
            <Btn label="Restore view"><Svg w={12} h={12}><path d="M.5 3.500h8v8h-8zM3 3V.5h8.500V9H9M3.500 6.500h2v2h-2z" stroke="#444" /></Svg></Btn>
            <Btn label="Close view"><Svg w={12} h={12}><path d="M.5.5h3L6 4 8.500.5h3L8 6l3.500 5.500h-3L6 8l-2.500 3.500h-3L4 6z" stroke="#444" /></Svg></Btn>
          </div>
          <NavBar />
        </div>
        <div className="flex w-4 flex-col items-center justify-between bg-[#f0f0f0] py-1">
          <ChevronUp size={12} strokeWidth={3} className="text-[#555]" />
          <span className="h-[17px] w-[15px] bg-[#cdcdcd]" />
          <ChevronDown size={12} strokeWidth={3} className="text-[#555]" />
        </div>
      </div>
      <div className="flex h-5 items-center pb-0.5 text-black">
        <span className="w-[76px] pl-6">1 : 100</span>
        {viewControls.map((control) => (
          <Btn key={control.name} label={control.name} className="w-[21px]"><Svg w={16} h={15}>{control.art}</Svg></Btn>
        ))}
        <ChevronLeft size={11} strokeWidth={3} className="ml-1 text-[#444]" />
        <div className="flex flex-1 justify-center"><span className="mr-0.5 h-4 w-[17px] bg-[#cdcdcd]" /></div>
        <ChevronRight size={12} strokeWidth={3} className="mr-5 text-[#444]" />
      </div>
    </main>
  )
}

/* ---------- project browser ---------- */

type TreeNode = { name: string; icon?: ReactNode; bold?: boolean; closed?: boolean; selected?: boolean; children?: TreeNode[] }

const leaves = (...names: string[]): TreeNode[] => names.map((name) => ({ name }))

const viewsIcon = <><path d="M4 1H1v3M11 1h3v3M4 14H1v-3M11 14h3v-3" stroke="#222" /><path d="M5 6l2-2h4v5l-2 2H5z" fill="#fff" stroke="#222" /></>
const legendIcon = <><path d="M.5.5h14v14H.5z" fill="#eef" stroke="#334" /><path d="M0 2h15" stroke="#334" strokeWidth="2" /><path d="M2 5h4v3H2zM2 10h4v3H2z" fill="#446" /><path d="M8 6h5M8 9h5M8 12h5" stroke="#446" strokeDasharray="2 1" /></>
const scheduleIcon = <><path d="M.5 2.500h14v11H.5z" fill="#fff" stroke="#334" /><path d="M0 4h15" stroke="#334" strokeWidth="2" /><path d="M1 7h13M1 10h13M5 4v9M10 4v9" stroke="#667" /></>
const sheetIcon = <><path d="M.5 2.500h10l4 4v8H.5z" fill="#fff" stroke="#334" /><path d="M10 2v5h4M3 7h5v3H6v3H3z" stroke="#446" fill="#dde" /></>
const familyIcon = <><path d="M1 2h5v6H1zM8 2h6v11H1v-3h7z" fill="#fff" stroke="#334" strokeWidth="1.200" /></>
const groupIcon = <><path d="M4 1H1v13h3M11 1h3v13h-3" stroke="#334" strokeWidth="1.200" /><circle cx="7" cy="6" r="3" fill="#ccd" stroke="#446" /><path d="M6 6l5-1 1 5-4 2z" fill="#aab" stroke="#446" /></>
const linkIcon = <><rect x=".8" y="5" width="8" height="5" rx="2.500" stroke="#c8960c" strokeWidth="1.800" /><rect x="7" y="5" width="8" height="5" rx="2.500" stroke="#a87800" strokeWidth="1.800" /></>

const tree: TreeNode[] = [
  {
    name: 'Views (todas)', icon: viewsIcon, selected: true, children: [
      {
        name: 'Floor Plans (Planta de piso)',
        children: [
          ...leaves('Piso 1', 'Piso 1 Copy 1'),
          { name: 'Piso 2', bold: true },
          ...leaves('Piso 3', 'Piso 4', 'Piso 5', 'Terreno'),
        ],
      },
      { name: 'Ceiling Plans (Planta de forro)', children: leaves('Piso 1', 'Piso 2', 'Piso 3', 'Piso 4', 'Piso 5') },
      { name: '3D Views (Vista 3D)', children: leaves('3D View 1', '3D View 2', '{3D}') },
      { name: 'Elevations (Elevação da construç', children: leaves('Este', 'Norte', 'Oeste', 'Sul') },
      { name: 'Sections (Corte da construção)', children: leaves('Corte 0', 'Corte 1', 'Corte 3') },
    ],
  },
  { name: 'Legends', icon: legendIcon },
  {
    name: 'Schedules/Quantities', icon: scheduleIcon, children: leaves(
      'Tabela das Grades e Corrimãos', 'Tabela das Janelas', 'Tabela das lajes', 'Tabela das paredes',
      'Tabela das portas', 'Tabela de quantidade dos materi', 'Tabela de quantidade dos materi',
    ),
  },
  { name: 'Sheets (todas)', icon: sheetIcon },
  { name: 'Families', icon: familyIcon, closed: true },
  { name: 'Groups', icon: groupIcon, children: [{ name: 'Detail' }, { name: 'Model', closed: true }] },
  { name: 'Revit Links', icon: linkIcon },
]

function Branch({ nodes, open = [] }: { nodes: TreeNode[]; open?: boolean[] }) {
  const depth = open.length
  const x = depth * 20 + 8.5
  const width = depth * 20 + (depth === 0 ? 19 : 24)
  return (
    <ul>
      {nodes.map((node, i) => {
        const last = i === nodes.length - 1
        const first = depth === 0 && i === 0
        return (
          <li key={`${node.name}-${i}`}>
            <div className="flex h-[18px] items-center whitespace-nowrap">
              <Svg w={width} h={18}>
                <g stroke="#999" strokeDasharray="1 1">
                  {open.map((more, c) => more && <path key={c} d={`M${c * 20 + 8.5} 0v18`} />)}
                  <path d={`M${x} ${first ? 10 : 0}V${last ? 10 : 18}M${x} 10.500H${width - 2}`} />
                </g>
                {(node.children || node.closed) && (
                  <>
                    <rect x={x - 4} y="6.500" width="8" height="8" fill="#fff" stroke="#888" />
                    <path d={`M${x - 2} 10.500h4${node.closed ? `M${x} 8.500v4` : ''}`} stroke="#224" />
                  </>
                )}
              </Svg>
              {node.icon && <span className="mr-[5px]"><Svg w={16} h={15}>{node.icon}</Svg></span>}
              <span className={`${node.bold ? 'font-bold' : ''} ${node.selected ? 'bg-[#e2e2e2]' : ''} px-0.5 leading-[17px]`}>
                {node.name}
              </span>
            </div>
            {node.children && <Branch nodes={node.children} open={[...open, !last]} />}
          </li>
        )
      })}
    </ul>
  )
}

function ProjectBrowser() {
  return (
    <aside className="ml-1.5 flex w-[220px] shrink-0 flex-col bg-[#f0f0f0] text-black">
      <PaletteTitle>Project Browser - AC019 - Arq 02</PaletteTitle>
      <div className="mr-0.5 flex min-h-0 flex-1 flex-col border-l-2 border-t-2 border-[#6b6b6b] bg-white">
        <div className="min-h-0 flex-1"><Branch nodes={tree} /></div>
        <div className="mb-0.5 flex h-4 items-center bg-[#f0f0f0] px-0.5">
          <ChevronLeft size={12} strokeWidth={3} className="text-[#444]" />
          <span className="ml-0.5 h-4 w-[131px] bg-[#cdcdcd]" />
          <ChevronRight size={12} strokeWidth={3} className="ml-auto text-[#444]" />
        </div>
      </div>
    </aside>
  )
}

/* ---------- status bar ---------- */

const pointer = <path d="M9 6v10l2-2 2 4 2-1-2-4h3z" fill="#fff" stroke="#333" />

const selectionToggles: { name: string; art: ReactNode }[] = [
  { name: 'Select links', art: <><rect x="1" y="3" width="8" height="5" rx="2.500" stroke="#c8960c" strokeWidth="2" /><rect x="7" y="3" width="8" height="5" rx="2.500" stroke="#c8960c" strokeWidth="2" />{pointer}</> },
  { name: 'Select underlay', art: <><path d="M1 13l8-9M1 13h10M3 10h7" stroke="#2f7fc0" strokeWidth="1.500" /><path d="M10 1l6 6M16 1l-6 6" stroke="#c41e1e" strokeWidth="2" />{pointer}</> },
  { name: 'Select pinned', art: <><path d="M3 2h8v6H3zM1 9h12M7 9v6" fill="#f0a060" stroke="#c46414" strokeWidth="1.500" />{pointer}</> },
  { name: 'Select by face', art: <><path d="M2 3l6-1v12H2z" fill="#e3f2fb" stroke="#2f7fc0" strokeWidth="1.500" /><path d="M10 1l6 6M16 1l-6 6" stroke="#c41e1e" strokeWidth="2" />{pointer}</> },
  { name: 'Drag on selection', art: <><path d="M6 0v12M0 6h12M4 2l2-2 2 2M4 10l2 2 2-2M2 4L0 6l2 2" stroke="#222" />{pointer}</> },
  { name: 'Filter', art: <path d="M1 2h15l-6 7v6l-3 2V9z" fill="#e6e6f0" stroke="#333" /> },
]

function StatusSelect({ label, value, className }: { label: string; value: string; className: string }) {
  return (
    <span className="relative">
      <select aria-label={label} disabled className={`block h-[18px] appearance-none bg-white pl-0.5 text-[#777] opacity-100 ${className}`}>
        <option>{value}</option>
      </select>
      <ChevronDown size={10} className="pointer-events-none absolute right-0.5 top-1.5 text-[#aaa]" />
    </span>
  )
}

function StatusBar() {
  return (
    <footer className="flex h-[21px] items-center overflow-hidden border-t-2 border-[#8a8a8a] bg-linear-to-b from-[#e2e2e2] to-[#c6c6c6] pt-px text-black">
      <p className="flex-1 pl-0.5">Click to enter line start point.</p>
      <Btn label="Worksets" className="w-[30px] bg-[#d2d2d2]">
        <Svg w={17} h={17}><path d="M2 17v-5l3-4 2 3v6M9 17V9l3-3 3 4v7M6 3h6M9 1v4" stroke="#888" strokeWidth="2" fill="#ccc" /></Svg>
      </Btn>
      <StatusSelect label="Active workset" value="" className="w-[204px]" />
      <Btn label="Editing requests" className="w-[30px]">
        <Svg w={16} h={17}><path d="M4 1h11v5H9l-3 3V6H4z" fill="#eee" stroke="#999" /><path d="M1 17l3-6 4 6z" fill="#888" /></Svg>
      </Btn>
      <span className="w-9 pl-0.5">:0</span>
      <Svg w={16} h={16}><rect width="16" height="16" rx="3" fill="#9a9a9a" /></Svg>
      <span className="mx-2.5">
        <Svg w={15} h={16}><path d="M0 0h15v16H0z" fill="#999" /><path d="M2 5l4 3v6M4 12l4-3 3 3" stroke="#e6e6e6" /></Svg>
      </span>
      <StatusSelect label="Active design option" value="Main Model" className="w-[154px]" />
      <div className="ml-[218px] flex w-[226px] items-center">
        {selectionToggles.map((toggle) => (
          <Btn key={toggle.name} label={toggle.name} className={toggle.name === 'Filter' ? 'w-5' : 'w-[26px]'}>
            <Svg w={17} h={18}>{toggle.art}</Svg>
          </Btn>
        ))}
        <span>:0</span>
      </div>
    </footer>
  )
}

export default function App() {
  return (
    <div className="flex h-screen flex-col overflow-hidden bg-white font-['Open_Sans','Noto_Sans',sans-serif] text-[11px]">
      <TitleBar />
      <TabBar />
      <Ribbon />
      <OptionsBar />
      <div className="flex min-h-0 flex-1 bg-[#f0f0f0]">
        <PropertiesPalette />
        <span className="w-1.5 shrink-0" />
        <DrawingArea />
        <ProjectBrowser />
      </div>
      <StatusBar />
      <div className="h-[43px] border-l border-black" />
    </div>
  )
}
